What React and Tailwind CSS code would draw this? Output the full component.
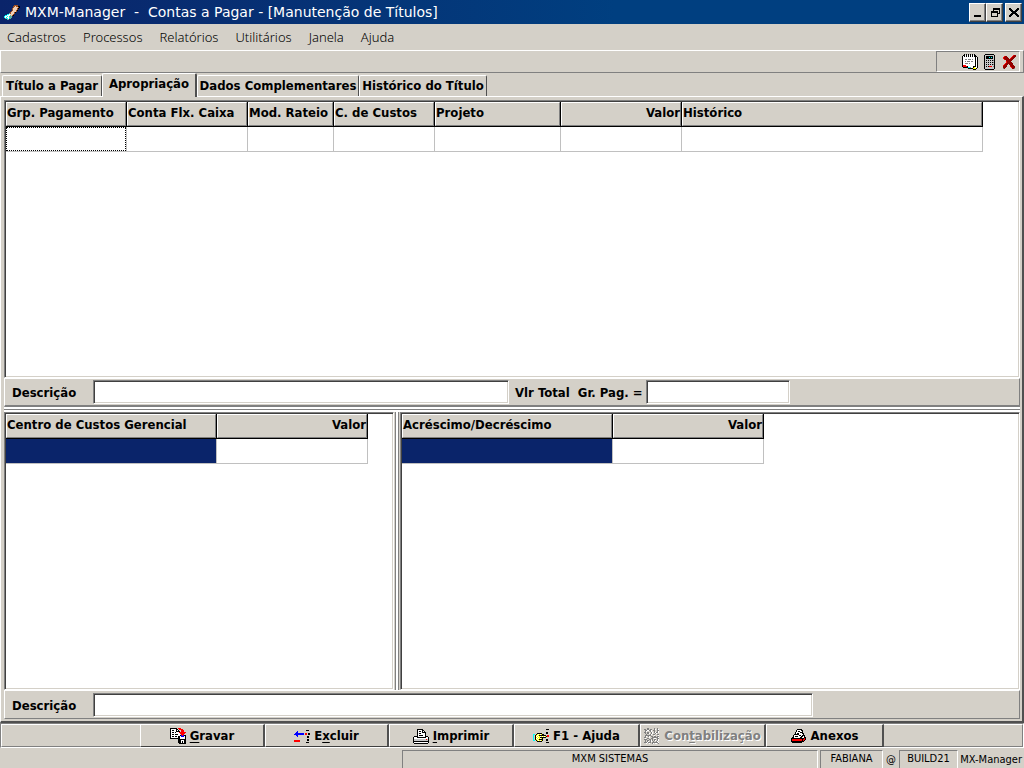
import React from 'react';

const PALETTE = {
  k: '#000000',
  w: '#ffffff',
  g: '#808080',
  s: '#c8c8c8',
  r: '#ff0000',
  m: '#900000',
  b: '#0000ff',
  c: '#00ffff',
  t: '#60b0a0',
  y: '#ffff00',
  o: '#a05020',
  p: '#f0d0b8',
};

// Each row is a string, one letter per pixel, a dot stays transparent.
function PixelIcon({ rows }) {
  const width = Math.max(...rows.map((row) => row.length));
  return (
    <svg width={width} height={rows.length} shapeRendering="crispEdges" aria-hidden="true" className="shrink-0">
      {rows.map((row, y) =>
        row.split('').map((key, x) =>
          PALETTE[key] ? <rect key={`${x}-${y}`} x={x} y={y} width="1" height="1" fill={PALETTE[key]} /> : null
        )
      )}
    </svg>
  );
}

const APP_ICON = [
  '..........oooo..',
  '.........oopookk',
  '.........oppppok',
  '........oppppok.',
  '........oppppo..',
  '........opppok..',
  '.......oppppo...',
  '......opppok....',
  '.....topppo.....',
  '...ccwpppo......',
  '.ccwwwtpok......',
  'cwwcwttt........',
  'cwtwwctt........',
  '.tccwtt.........',
  '...tt...........',
];

const NOTES_ICON = [
  '..k.k.k.k.k.k...',
  '.kkwkwkwkwkwkk..',
  'kwkwkwkwkwkwkkk.',
  'kwwwwwwwwwwwwkwk',
  'kwwwwwwwwwwwwkwk',
  'kwwggwgggwgwwkwk',
  'kwwwwwwwwwwwwkwk',
  'kwwgwgggwggwwkwk',
  'kwwwwwwwwwwwwkwk',
  'kwwgggwgwwwwwkwk',
  'kwwwwwwwwwwwwkwk',
  'krrrwwwwwwwwwkwk',
  'krrrrkwwwwwkkkwk',
  '.kkkkkcctwwkywwk',
  '......kkkkkyyyk.',
  '...........kkk..',
];

const CALC_ICON = [
  '.kkkkkkkkk.',
  'ksssssssssk',
  'kskkkkkkksk',
  'kskkkckcksk',
  'kskkkkkkksk',
  'ksssssssssk',
  'kskskskskgk',
  'ksssssssssk',
  'kskskskskgk',
  'ksssssssssk',
  'kskskskskgk',
  'ksssssssssk',
  'kskskrrrsgk',
  'ksssssssssk',
  'ksssssssssk',
  '.kkkkkkkkk.',
];

const CLOSE_ICON = [
  '..........rmm',
  '.rmm.....rmmm',
  'rmmmm...rmmm.',
  'rmmmmm.rmmm..',
  '.rmmmmmmmm...',
  '...mmmmmm....',
  '...rmmmm.....',
  '...rmmmmm....',
  '..rmmmmmmm...',
  '.rmmm.mmmm...',
  'rmmm...mmmm..',
  'mmmm...rmmmm.',
  'mmm.....rmmm.',
  'gm.......mmg.',
];

const SAVE_ICON = [
  'kkkkkkk.rrr.....',
  'kwwwwwkk.rrrr...',
  'kwkkwwkwk..rrr..',
  'kwwwwwkkkk.rrr..',
  'kwkkwkwwwrrrrrrr',
  'kwwwwwwwwwrrrrr.',
  'kwkkwkkkww.rrr..',
  'kwwwwwwwwwkbrbkk',
  'kwkkwkkwkkwbbbwk',
  'kwwwwwwwkkwwwwwk',
  'kkkkkkkkkkwwwwwk',
  '........kkkkkkkk',
  '........kkkwwwkk',
  '........kkkwkwkk',
  '........kkkwkwkk',
  '.........kkkkkkk',
];

const DELETE_ICON = [
  '............kkk.',
  '...b............',
  '..bb............',
  '.bbbbbbbbb.rr.kk',
  'bbbbbbbbbb.rr.kk',
  '..bb............',
  '...b.........kk.',
  '.............kk.',
  '................',
  '.............kk.',
  'rrrrrr.......kk.',
  'rrrrrr..........',
  '............kkk.',
];

const PRINT_ICON = [
  '....kkkkkk......',
  '....kwwwwkk.....',
  '....kwkkwkwk....',
  '....kwwwwkkkk...',
  '....kwkkwwwwk...',
  '....kwwwwwwwk...',
  '....kwkkkkwwk...',
  '.kkkkwwwwwwwkkk.',
  'kwwwkkkkkkkkkwwk',
  'kwwwwwwwwwwwwwwk',
  'kssssssssssssrsk',
  'kssssssssssssssk',
  'kkkkkkkkkkkkkkkk',
  'kwwwwwwwwwwwwwwk',
  '.kkkkkkkkkkkkkk.',
];

const HELP_ICON = [
  '.............kkk',
  '................',
  '................',
  '.............kk.',
  '....kkkkk....kk.',
  'cc.kywywykk.....',
  'c.kywykkkkkkk.rr',
  'c.kwywywywywykrr',
  'c.kywyykkkkkk...',
  'c.kwywywyk......',
  'c.kywykkkk...kk.',
  'cc.kywywyk...kk.',
  '....kkkkk.......',
  '.............kkk',
];

const GEARS_ICON = [
  '...gg.....g..g..',
  'gg.gg.gg..gw.gw.',
  '.ggwwggw.gg..gg.',
  '.gw...gw..g..gw.',
  'gg.gg..gw.gwggw.',
  '.g.ggw.gw..gw...',
  '..g...gw.gg..gg.',
  '.gggggg...w...w.',
  '.gw.gw.gg.gg.gg.',
  'gg...w..ggggggw.',
  '.w.gg..gg.ww.gg.',
  'ggg..gg.g.gg.gw.',
  '.g.gg.gwg.gw.gw.',
  '.g.gw.gw.g..gw..',
  'gggwggg.ggggggw.',
  '..w..w..gw.ww.g.',
];

const ATTACH_ICON = [
  '......kkkkk.....',
  '.....kwwwwkk....',
  '.....kwkkwwk....',
  '....kwwwwkkk....',
  '....kwkkwwwkk...',
  '...kkkkkwwwwk...',
  '..kwwwwwkkwkkk..',
  '..kwkkkwwwkkwk..',
  '.kkwwwwwwkkwwkk.',
  'kkkkkkkkkkkkkrk.',
  'krrrrrrrrrrkrrk.',
  'krrrrrrrrrrkrk..',
  'kkkkkkkkkkkkk...',
  '.kkkkkkkkkk.....',
];

const MINIMIZE_ICON = [
  '.........',
  '.........',
  '.........',
  '.........',
  '.........',
  '.........',
  '.........',
  '.kkkkkkk.',
  '.kkkkkkk.',
];
const RESTORE_ICON = [
  '...kkkkkkk',
  '...kkkkkkk',
  '...k.....k',
  '.kkkkkkk.k',
  '.kkkkkkk.k',
  '.k.....kkk',
  '.k.....k..',
  '.k.....k..',
  '.kkkkkkk..',
];
const X_ICON = [
  'kk......kk',
  'kkk....kkk',
  '.kkk..kkk.',
  '..kkkkkk..',
  '...kkkk...',
  '..kkkkkk..',
  '.kkk..kkk.',
  'kkk....kkk',
  'kk......kk',
];

const MENUS = ['Cadastros', 'Processos', 'Relatórios', 'Utilitários', 'Janela', 'Ajuda'];

const PAYMENT_COLUMNS = [
  { label: 'Grp. Pagamento', width: 'w-[121px]' },
  { label: 'Conta Flx. Caixa', width: 'w-[121px]' },
  { label: 'Mod. Rateio', width: 'w-[86px]' },
  { label: 'C. de Custos', width: 'w-[101px]' },
  { label: 'Projeto', width: 'w-[126px]' },
  { label: 'Valor', width: 'w-[121px]', right: true },
  { label: 'Histórico', width: 'w-[301px]' },
];

const COST_COLUMNS = [
  { label: 'Centro de Custos Gerencial', width: 'w-[211px]' },
  { label: 'Valor', width: 'w-[151px]', right: true },
];

const ADDITION_COLUMNS = [
  { label: 'Acréscimo/Decréscimo', width: 'w-[211px]' },
  { label: 'Valor', width: 'w-[151px]', right: true },
];

const SUNKEN =
  'border border-t-[#808080] border-r-white border-b-white border-l-[#808080] bg-white shadow-[inset_1px_1px_0_#404040,inset_-1px_-1px_0_#d4d0c8]';

function WindowButton({ label, icon }) {
  return (
    <button
      type="button"
      aria-label={label}
      className="flex h-[19px] w-[17px] items-center justify-center border border-t-white border-r-[#404040] border-b-[#404040] border-l-white bg-[#d4d0c8] shadow-[inset_-1px_-1px_0_#808080]"
    >
      <PixelIcon rows={icon} />
    </button>
  );
}

function Tab({ label, active, className }) {
  return (
    <button
      type="button"
      role="tab"
      aria-selected={Boolean(active)}
      className={`rounded-t-xs border-t border-l border-t-white border-l-white whitespace-nowrap ${
        active
          ? 'relative -mb-px h-6 border-r-2 border-r-[#505050] bg-[#d4d0c8] pb-1'
          : 'h-[21px] border-r border-r-[#505050]'
      } ${className}`}
    >
      {label}
    </button>
  );
}

function Grid({ columns, label, selected, className }) {
  return (
    <div className={`min-w-0 overflow-hidden p-px ${SUNKEN} ${className}`}>
      <table aria-label={label} className="w-0 table-fixed border-separate border-spacing-0">
        <thead>
          <tr>
            {columns.map((column) => (
              <th key={column.label} className={`${column.width} h-[25px] border-r border-b border-black p-0`}>
                <div
                  className={`h-6 border border-t-white border-r-[#808080] border-b-[#808080] border-l-white bg-[#d4d0c8] leading-5 whitespace-nowrap ${column.right ? 'text-right' : 'text-left'}`}
                >
                  {column.label}
                </div>
              </th>
            ))}
          </tr>
        </thead>
        <tbody>
          <tr>
            {columns.map((column, index) => (
              <td key={column.label} className="h-[25px] border-r border-b border-[#c0c0c0] p-0">
                {index === 0 && (
                  <div className={selected ? 'h-6 bg-[#0a246a]' : 'h-6 border border-dotted border-black'} />
                )}
              </td>
            ))}
          </tr>
        </tbody>
      </table>
    </div>
  );
}

function Field({ id, className }) {
  return <input id={id} type="text" className={`h-6 px-1 outline-none ${SUNKEN} ${className}`} />;
}

function ActionButton({ icon, before, hot, after, className, disabled }) {
  return (
    <button
      type="button"
      disabled={disabled}
      className={`flex h-[23px] items-center justify-center gap-1 border-t border-r-2 border-b border-l border-t-white border-r-[#505050] border-b-[#404040] border-l-white pt-px whitespace-nowrap ${disabled ? 'text-[#808080] [text-shadow:1px_1px_0_#fff]' : ''} ${className}`}
    >
      <PixelIcon rows={icon} />
      <span>
        {before}
        <span className="underline underline-offset-2">{hot}</span>
        {after}
      </span>
    </button>
  );
}

function StatusPanel({ children, className }) {
  return (
    <div
      className={`h-[18px] overflow-hidden border-t border-r border-l border-t-[#808080] border-r-white border-l-[#808080] text-center leading-4 whitespace-nowrap ${className}`}
    >
      {children}
    </div>
  );
}

export default function App() {
  return (
    <div className="flex h-screen flex-col overflow-hidden bg-[#d4d0c8] font-['DejaVu_Sans_Condensed','DejaVu_Sans',sans-serif] text-[13px] text-black">
      <header className="flex h-6 shrink-0 items-center bg-linear-to-r from-[#0a246a] to-[#003f80] to-60% pr-[2px] pl-1 text-white">
        <PixelIcon rows={APP_ICON} />
        <h1 className="flex-1 pl-[5px] font-['DejaVu_Sans',sans-serif] text-sm leading-6 whitespace-pre">
          MXM-Manager  -  Contas a Pagar - [Manutenção de Títulos]
        </h1>
        <div className="flex">
          <WindowButton label="Minimizar" icon={MINIMIZE_ICON} />
          <WindowButton label="Restaurar" icon={RESTORE_ICON} />
          <div className="ml-[2px]">
            <WindowButton label="Fechar" icon={X_ICON} />
          </div>
        </div>
      </header>

      <nav className="flex h-[26px] shrink-0 items-center gap-[17px] px-[7px] pt-[2px] font-['Noto_Sans',sans-serif] font-light">
        {MENUS.map((menu) => (
          <button key={menu} type="button">
            {menu}
          </button>
        ))}
      </nav>

      <div className="flex h-[23px] shrink-0 justify-end border border-t-white border-r-[#808080] border-b-[#808080] border-l-white pr-[3px]">
        <div className="flex w-[84px] items-center justify-end gap-[6px] border border-t-[#808080] border-r-white border-b-white border-l-[#808080] pr-[3px]">
          <button type="button" aria-label="Agenda">
            <PixelIcon rows={NOTES_ICON} />
          </button>
          <button type="button" aria-label="Calculadora">
            <PixelIcon rows={CALC_ICON} />
          </button>
          <button type="button" aria-label="Sair" className="pl-[2px]">
            <PixelIcon rows={CLOSE_ICON} />
          </button>
        </div>
      </div>

      <div role="tablist" className="flex h-[23px] shrink-0 items-end pl-[2px] font-bold">
        <Tab label="Título a Pagar" className="w-[100px]" />
        <Tab label="Apropriação" active className="w-[95px]" />
        <Tab label="Dados Complementares" className="w-[162px]" />
        <Tab label="Histórico do Título" className="w-[128px]" />
      </div>

      <main className="flex min-h-0 flex-1 flex-col border-t border-r-2 border-b-2 border-l border-t-white border-r-[#505050] border-b-[#505050] border-l-white pt-[3px] pr-[2px] pb-[2px] pl-[3px]">
        <div className="flex min-h-0 flex-1">
          <Grid columns={PAYMENT_COLUMNS} label="Apropriação" className="flex-1" />
        </div>

        <div className="flex h-[29px] shrink-0 items-center border border-b-2 border-t-white border-r-[#808080] border-b-[#808080] border-l-white pl-[7px] font-bold">
          <label htmlFor="descricao" className="w-[81px] pt-[2px]">
            Descrição
          </label>
          <Field id="descricao" className="w-[416px]" />
          <label htmlFor="total" className="w-[137px] pt-[2px] pl-[6px] whitespace-pre">
            Vlr Total  Gr. Pag. =
          </label>
          <Field id="total" className="w-[144px]" />
        </div>

        <div className="flex h-[5px] shrink-0 flex-col justify-center border-t-2 border-b-2 border-white">
          <div className="h-px bg-[#808080]" />
        </div>

        <div className="flex min-h-0 flex-1">
          <Grid columns={COST_COLUMNS} label="Centro de custos" selected className="w-[390px]" />
          <div className="mx-px w-1 border-x border-[#808080] bg-white" />
          <Grid columns={ADDITION_COLUMNS} label="Acréscimo e decréscimo" selected className="flex-1" />
        </div>

        <div className="flex h-[29px] shrink-0 items-center border border-t-white border-r-[#808080] border-b-[#808080] border-l-white pl-[7px] font-bold">
          <label htmlFor="descricao-centro" className="w-[81px] pt-[2px]">
            Descrição
          </label>
          <Field id="descricao-centro" className="w-[720px]" />
        </div>
      </main>

      <div className="flex h-[25px] shrink-0 border border-t-[#808080] border-r-white border-b-white border-l-[#808080] font-bold">
        <div className="w-[139px] border border-t-white border-r-0 border-b-[#808080] border-l-white" />
        <ActionButton icon={SAVE_ICON} hot="G" after="ravar" className="w-[125px]" />
        <ActionButton icon={DELETE_ICON} before="E" hot="x" after="cluir" className="w-[124px]" />
        <ActionButton icon={PRINT_ICON} hot="I" after="mprimir" className="w-[125px]" />
        <ActionButton icon={HELP_ICON} before="F1 - Ajuda" className="w-[126px]" />
        <ActionButton icon={GEARS_ICON} before="Con" hot="t" after="abilização" disabled className="w-[126px]" />
        <ActionButton icon={ATTACH_ICON} before="Anexos" className="w-[118px]" />
        <div className="flex-1 border border-t-white border-r-[#808080] border-b-[#808080] border-l-0" />
      </div>

      <footer className="flex h-5 shrink-0 items-end text-[11px]">
        <div className="w-[402px]" />
        <StatusPanel className="flex-1">MXM SISTEMAS</StatusPanel>
        <StatusPanel className="ml-[2px] w-[63px]">FABIANA</StatusPanel>
        <div className="w-4 text-center leading-4">@</div>
        <StatusPanel className="w-[59px]">BUILD21</StatusPanel>
        <div className="w-[66px] pr-[2px] text-right leading-4 whitespace-nowrap">MX-Manager</div>
      </footer>
    </div>
  );
}
